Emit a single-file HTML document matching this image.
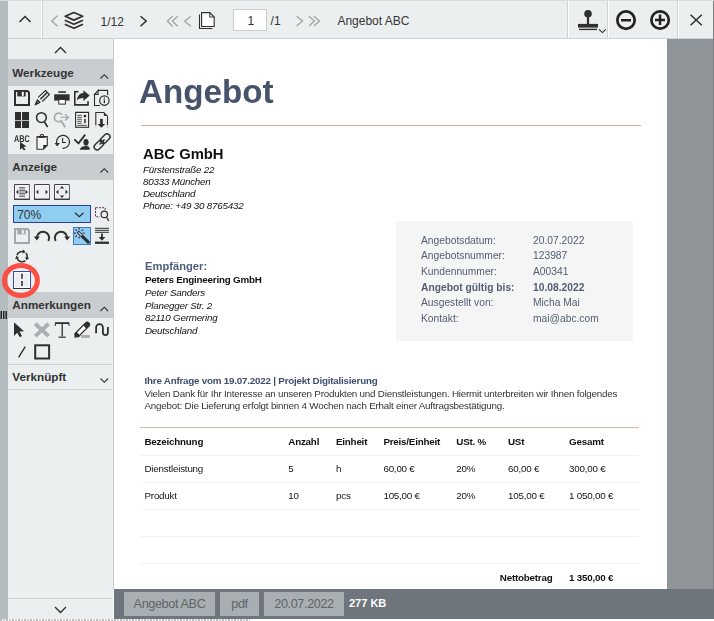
<!DOCTYPE html>
<html><head><meta charset="utf-8">
<style>
*{margin:0;padding:0;box-sizing:border-box}
html,body{width:714px;height:621px;overflow:hidden;background:#fff;font-family:"Liberation Sans",sans-serif}
.a{position:absolute;display:block}
.t{position:absolute;white-space:nowrap}
svg.ov{position:absolute;left:0;top:0}
</style></head><body>

<div class="a" style="left:0px;top:0px;width:714px;height:621px;background:#ffffff;"></div>
<div class="a" style="left:8px;top:39px;width:105px;height:580px;background:#eceff0;"></div>
<div class="a" style="left:113px;top:39px;width:1px;height:550px;background:#c6cacd;"></div>
<div class="a" style="left:114px;top:39px;width:553px;height:550px;background:#ffffff;"></div>
<div class="a" style="left:667px;top:39px;width:47px;height:550px;background:#8f9499;"></div>
<div class="a" style="left:713px;top:0px;width:1px;height:619px;background:#787d82;"></div>
<div class="a" style="left:0px;top:1px;width:8px;height:618px;background:#b4bcbf;"></div>
<div class="a" style="left:0px;top:0px;width:714px;height:1px;background:#d9dcde;"></div>
<div class="a" style="left:114px;top:589px;width:600px;height:30px;background:#6e757d;"></div>
<div class="a" style="left:8px;top:0px;width:705px;height:39px;background:#eceff0;"></div>
<div class="a" style="left:8px;top:0px;width:705px;height:1px;background:#d9dcde;"></div>
<div class="a" style="left:8px;top:38px;width:705px;height:1px;background:#cfd3d5;"></div>
<div class="a" style="left:41px;top:1px;width:1px;height:37px;background:#ffffff;"></div>
<div class="a" style="left:42px;top:1px;width:1px;height:37px;background:#d0d4d6;"></div>
<div class="a" style="left:567px;top:1px;width:1px;height:37px;background:#d0d4d6;"></div>
<div class="a" style="left:568px;top:1px;width:1px;height:37px;background:#ffffff;"></div>
<div class="a" style="left:607px;top:1px;width:1px;height:37px;background:#d0d4d6;"></div>
<div class="a" style="left:608px;top:1px;width:1px;height:37px;background:#ffffff;"></div>
<div class="a" style="left:677px;top:1px;width:1px;height:37px;background:#d0d4d6;"></div>
<div class="a" style="left:678px;top:1px;width:1px;height:37px;background:#ffffff;"></div>
<div class="a" style="left:233px;top:9px;width:34px;height:22px;background:#ffffff;border:1px solid #c9cdd0"></div>
<div class="t" style="left:100.5px;top:15.54px;font-size:12px;line-height:12px;font-weight:normal;font-style:normal;color:#353535;">1/12</div>
<div class="t" style="left:247.4px;top:15.24px;font-size:12px;line-height:12px;font-weight:normal;font-style:normal;color:#353535;">1</div>
<div class="t" style="left:270.6px;top:14.94px;font-size:12px;line-height:12px;font-weight:normal;font-style:normal;color:#353535;">/1</div>
<div class="t" style="left:337.4px;top:14.94px;font-size:12px;line-height:12px;font-weight:normal;font-style:normal;color:#353535;">Angebot ABC</div>
<div class="a" style="left:8px;top:59px;width:105px;height:27px;background:#c9cdd0;"></div>
<div class="a" style="left:8px;top:154px;width:105px;height:26px;background:#c9cdd0;"></div>
<div class="a" style="left:8px;top:292px;width:105px;height:26px;background:#c9cdd0;"></div>
<div class="a" style="left:8px;top:364px;width:104px;height:1px;background:#d0d4d6;"></div>
<div class="a" style="left:8px;top:389px;width:104px;height:1px;background:#d0d4d6;"></div>
<div class="a" style="left:8px;top:598px;width:104px;height:1px;background:#d0d4d6;"></div>
<div class="t" style="left:12.3px;top:67.20px;font-size:11.7px;line-height:11.7px;font-weight:bold;font-style:normal;color:#333;">Werkzeuge</div>
<div class="t" style="left:12.3px;top:161.20px;font-size:11.7px;line-height:11.7px;font-weight:bold;font-style:normal;color:#333;">Anzeige</div>
<div class="t" style="left:12.3px;top:299.40px;font-size:11.7px;line-height:11.7px;font-weight:bold;font-style:normal;color:#333;">Anmerkungen</div>
<div class="t" style="left:12.3px;top:371.20px;font-size:11.7px;line-height:11.7px;font-weight:bold;font-style:normal;color:#333;">Verknüpft</div>
<div class="a" style="left:13px;top:205px;width:78px;height:18px;background:#8fcdf1;border:1px solid #2c3ea0"></div>
<div class="t" style="left:17.2px;top:208.94px;font-size:12px;line-height:12px;font-weight:normal;font-style:normal;color:#333;">70%</div>
<div class="a" style="left:73px;top:227px;width:18px;height:18px;background:#8fcdf1;border:1px solid #3a78c8"></div>
<div class="a" style="left:13px;top:271px;width:18px;height:18px;background:#eceff0;border:1px solid #3a44b0;border-bottom:1.5px solid #333;box-shadow:inset 0 0 0 1px #fafbfb"></div>
<div class="a" style="left:124px;top:592px;width:91px;height:24px;background:#a9aeb2;"></div>
<div class="t" style="left:124px;top:592px;width:91px;height:24px;line-height:25px;text-align:center;font-size:12.6px;letter-spacing:-0.35px;color:#5e646a">Angebot ABC</div>
<div class="a" style="left:220px;top:592px;width:39px;height:24px;background:#a9aeb2;"></div>
<div class="t" style="left:220px;top:592px;width:39px;height:24px;line-height:25px;text-align:center;font-size:12.6px;letter-spacing:-0.35px;color:#5e646a">pdf</div>
<div class="a" style="left:264px;top:592px;width:80px;height:24px;background:#a9aeb2;"></div>
<div class="t" style="left:264px;top:592px;width:80px;height:24px;line-height:25px;text-align:center;font-size:12.6px;letter-spacing:-0.35px;color:#5e646a">20.07.2022</div>
<div class="t" style="left:349px;top:598.19px;font-size:11px;line-height:11px;font-weight:bold;font-style:normal;color:#ffffff;">277 KB</div>
<div style="position:absolute;left:0;top:0;width:714px;height:621px;will-change:transform">
<div class="t" style="left:139px;top:75.40px;font-size:33.2px;line-height:33.2px;font-weight:bold;font-style:normal;color:#46536a;">Angebot</div>
<div class="a" style="left:141px;top:125px;width:500px;height:1px;background:#cfae9c;"></div>
<div class="t" style="left:143px;top:146.97px;font-size:14.8px;line-height:14.8px;font-weight:bold;font-style:normal;color:#111;">ABC GmbH</div>
<div class="t" style="left:143px;top:165.00px;font-size:9.8px;line-height:9.8px;font-weight:normal;font-style:italic;color:#111;letter-spacing:-0.21px">Fürstenstraße 22</div>
<div class="t" style="left:143px;top:176.95px;font-size:9.8px;line-height:9.8px;font-weight:normal;font-style:italic;color:#111;letter-spacing:-0.21px">80333 München</div>
<div class="t" style="left:143px;top:188.90px;font-size:9.8px;line-height:9.8px;font-weight:normal;font-style:italic;color:#111;letter-spacing:-0.21px">Deutschland</div>
<div class="t" style="left:143px;top:200.85px;font-size:9.8px;line-height:9.8px;font-weight:normal;font-style:italic;color:#111;letter-spacing:-0.21px">Phone: +49 30 8765432</div>
<div class="a" style="left:396px;top:221px;width:237px;height:120px;background:#f5f5f5;"></div>
<div class="t" style="left:421px;top:235.61px;font-size:10.27px;line-height:10.27px;font-weight:normal;font-style:normal;color:#535e70;">Angebotsdatum:</div>
<div class="t" style="left:533px;top:235.61px;font-size:10.27px;line-height:10.27px;font-weight:normal;font-style:normal;color:#535e70;">20.07.2022</div>
<div class="t" style="left:421px;top:251.26px;font-size:10.27px;line-height:10.27px;font-weight:normal;font-style:normal;color:#535e70;">Angebotsnummer:</div>
<div class="t" style="left:533px;top:251.26px;font-size:10.27px;line-height:10.27px;font-weight:normal;font-style:normal;color:#535e70;">123987</div>
<div class="t" style="left:421px;top:266.91px;font-size:10.27px;line-height:10.27px;font-weight:normal;font-style:normal;color:#535e70;">Kundennummer:</div>
<div class="t" style="left:533px;top:266.91px;font-size:10.27px;line-height:10.27px;font-weight:normal;font-style:normal;color:#535e70;">A00341</div>
<div class="t" style="left:421px;top:282.56px;font-size:10.27px;line-height:10.27px;font-weight:bold;font-style:normal;color:#535e70;">Angebot gültig bis:</div>
<div class="t" style="left:533px;top:282.56px;font-size:10.27px;line-height:10.27px;font-weight:bold;font-style:normal;color:#535e70;">10.08.2022</div>
<div class="t" style="left:421px;top:298.21px;font-size:10.27px;line-height:10.27px;font-weight:normal;font-style:normal;color:#535e70;">Ausgestellt von:</div>
<div class="t" style="left:533px;top:298.21px;font-size:10.27px;line-height:10.27px;font-weight:normal;font-style:normal;color:#535e70;">Micha Mai</div>
<div class="t" style="left:421px;top:313.86px;font-size:10.27px;line-height:10.27px;font-weight:normal;font-style:normal;color:#535e70;">Kontakt:</div>
<div class="t" style="left:533px;top:313.86px;font-size:10.27px;line-height:10.27px;font-weight:normal;font-style:normal;color:#535e70;">mai@abc.com</div>
<div class="t" style="left:145px;top:260.72px;font-size:11.2px;line-height:11.2px;font-weight:bold;font-style:normal;color:#4f5d7a;">Empfänger:</div>
<div class="t" style="left:145px;top:274.60px;font-size:9.8px;line-height:9.8px;font-weight:bold;font-style:normal;color:#111;letter-spacing:-0.21px">Peters Engineering GmbH</div>
<div class="t" style="left:145px;top:287.70px;font-size:9.8px;line-height:9.8px;font-weight:normal;font-style:italic;color:#111;letter-spacing:-0.21px">Peter Sanders</div>
<div class="t" style="left:145px;top:300.50px;font-size:9.8px;line-height:9.8px;font-weight:normal;font-style:italic;color:#111;letter-spacing:-0.21px">Planegger Str. 2</div>
<div class="t" style="left:145px;top:313.30px;font-size:9.8px;line-height:9.8px;font-weight:normal;font-style:italic;color:#111;letter-spacing:-0.21px">82110 Germering</div>
<div class="t" style="left:145px;top:326.10px;font-size:9.8px;line-height:9.8px;font-weight:normal;font-style:italic;color:#111;letter-spacing:-0.21px">Deutschland</div>
<div class="t" style="left:144.5px;top:375.60px;font-size:9.8px;line-height:9.8px;font-weight:bold;font-style:normal;color:#3f4e6e;letter-spacing:-0.21px">Ihre Anfrage vom 19.07.2022 | Projekt Digitalisierung</div>
<div class="t" style="left:144.5px;top:388.70px;font-size:9.8px;line-height:9.8px;font-weight:normal;font-style:normal;color:#333;letter-spacing:-0.21px">Vielen Dank für Ihr Interesse an unseren Produkten und Dienstleistungen. Hiermit unterbreiten wir Ihnen folgendes</div>
<div class="t" style="left:144.5px;top:400.90px;font-size:9.8px;line-height:9.8px;font-weight:normal;font-style:normal;color:#333;letter-spacing:-0.21px">Angebot: Die Lieferung erfolgt binnen 4 Wochen nach Erhalt einer Auftragsbestätigung.</div>
<div class="a" style="left:140px;top:427px;width:499px;height:1px;background:#d4b6a5;"></div>
<div class="a" style="left:140px;top:455px;width:499px;height:1px;background:#eff3f3;"></div>
<div class="a" style="left:140px;top:482px;width:499px;height:1px;background:#eff3f3;"></div>
<div class="a" style="left:140px;top:509px;width:499px;height:1px;background:#eff3f3;"></div>
<div class="a" style="left:140px;top:536px;width:499px;height:1px;background:#eff3f3;"></div>
<div class="a" style="left:140px;top:563px;width:499px;height:1px;background:#eff3f3;"></div>
<div class="t" style="left:144.5px;top:437.30px;font-size:9.8px;line-height:9.8px;font-weight:bold;font-style:normal;color:#111;letter-spacing:-0.21px">Bezeichnung</div>
<div class="t" style="left:288.3px;top:437.30px;font-size:9.8px;line-height:9.8px;font-weight:bold;font-style:normal;color:#111;letter-spacing:-0.21px">Anzahl</div>
<div class="t" style="left:336px;top:437.30px;font-size:9.8px;line-height:9.8px;font-weight:bold;font-style:normal;color:#111;letter-spacing:-0.21px">Einheit</div>
<div class="t" style="left:383.4px;top:437.30px;font-size:9.8px;line-height:9.8px;font-weight:bold;font-style:normal;color:#111;letter-spacing:-0.21px">Preis/Einheit</div>
<div class="t" style="left:456.3px;top:437.30px;font-size:9.8px;line-height:9.8px;font-weight:bold;font-style:normal;color:#111;letter-spacing:-0.21px">USt. %</div>
<div class="t" style="left:508px;top:437.30px;font-size:9.8px;line-height:9.8px;font-weight:bold;font-style:normal;color:#111;letter-spacing:-0.21px">USt</div>
<div class="t" style="left:569px;top:437.30px;font-size:9.8px;line-height:9.8px;font-weight:bold;font-style:normal;color:#111;letter-spacing:-0.21px">Gesamt</div>
<div class="t" style="left:144.5px;top:463.70px;font-size:9.8px;line-height:9.8px;font-weight:normal;font-style:normal;color:#151515;letter-spacing:-0.21px">Dienstleistung</div>
<div class="t" style="left:288.3px;top:463.70px;font-size:9.8px;line-height:9.8px;font-weight:normal;font-style:normal;color:#151515;letter-spacing:-0.21px">5</div>
<div class="t" style="left:336px;top:463.70px;font-size:9.8px;line-height:9.8px;font-weight:normal;font-style:normal;color:#151515;letter-spacing:-0.21px">h</div>
<div class="t" style="left:383.4px;top:463.70px;font-size:9.8px;line-height:9.8px;font-weight:normal;font-style:normal;color:#151515;letter-spacing:-0.21px">60,00 €</div>
<div class="t" style="left:456.3px;top:463.70px;font-size:9.8px;line-height:9.8px;font-weight:normal;font-style:normal;color:#151515;letter-spacing:-0.21px">20%</div>
<div class="t" style="left:508px;top:463.70px;font-size:9.8px;line-height:9.8px;font-weight:normal;font-style:normal;color:#151515;letter-spacing:-0.21px">60,00 €</div>
<div class="t" style="left:569px;top:463.70px;font-size:9.8px;line-height:9.8px;font-weight:normal;font-style:normal;color:#151515;letter-spacing:-0.21px">300,00 €</div>
<div class="t" style="left:144.5px;top:490.70px;font-size:9.8px;line-height:9.8px;font-weight:normal;font-style:normal;color:#151515;letter-spacing:-0.21px">Produkt</div>
<div class="t" style="left:288.3px;top:490.70px;font-size:9.8px;line-height:9.8px;font-weight:normal;font-style:normal;color:#151515;letter-spacing:-0.21px">10</div>
<div class="t" style="left:336px;top:490.70px;font-size:9.8px;line-height:9.8px;font-weight:normal;font-style:normal;color:#151515;letter-spacing:-0.21px">pcs</div>
<div class="t" style="left:383.4px;top:490.70px;font-size:9.8px;line-height:9.8px;font-weight:normal;font-style:normal;color:#151515;letter-spacing:-0.21px">105,00 €</div>
<div class="t" style="left:456.3px;top:490.70px;font-size:9.8px;line-height:9.8px;font-weight:normal;font-style:normal;color:#151515;letter-spacing:-0.21px">20%</div>
<div class="t" style="left:508px;top:490.70px;font-size:9.8px;line-height:9.8px;font-weight:normal;font-style:normal;color:#151515;letter-spacing:-0.21px">105,00 €</div>
<div class="t" style="left:569px;top:490.70px;font-size:9.8px;line-height:9.8px;font-weight:normal;font-style:normal;color:#151515;letter-spacing:-0.21px">1 050,00 €</div>
<div class="t" style="left:499.8px;top:573.30px;font-size:9.8px;line-height:9.8px;font-weight:bold;font-style:normal;color:#111;letter-spacing:-0.21px">Nettobetrag</div>
<div class="t" style="left:569px;top:573.30px;font-size:9.8px;line-height:9.8px;font-weight:bold;font-style:normal;color:#111;letter-spacing:-0.21px">1 350,00 €</div>
</div>
<div class="a" style="left:0px;top:619px;width:714px;height:2px;background:#ffffff;"></div>
<div class="a" style="left:0px;top:619px;width:250px;height:2px;background:repeating-linear-gradient(90deg,#666 0 2px,#fff 2px 3px,#999 3px 5px,#fff 5px 6px);opacity:.45"></div>
<svg class="ov" width="714" height="621" viewBox="0 0 714 621">
<polyline points="19.5,22 25,16.5 30.5,22" fill="none" stroke="#2f2f2f" stroke-width="1.5"/>
<polyline points="57.5,15.8 51.8,21 57.5,26.2" fill="none" stroke="#9ca2a7" stroke-width="1.4"/>
<polygon points="65.2,16.3 73.9,12.5 82.7,16.3 73.9,20.1" fill="none" stroke="#2f2f2f" stroke-width="1.7" stroke-linejoin="round"/>
<polyline points="64.8,20.3 73.9,24.3 83,20.3" fill="none" stroke="#2f2f2f" stroke-width="1.7" stroke-linejoin="round"/>
<polyline points="64.8,24.2 73.9,28.2 83,24.2" fill="none" stroke="#2f2f2f" stroke-width="1.7" stroke-linejoin="round"/>
<polyline points="140.5,16.2 146.2,21 140.5,26.2" fill="none" stroke="#2f2f2f" stroke-width="1.5"/>
<polyline points="172.6,16.3 167.4,21.3 172.6,26.3" fill="none" stroke="#9ca2a7" stroke-width="1.25"/>
<polyline points="177.6,16.3 172.4,21.3 177.6,26.3" fill="none" stroke="#9ca2a7" stroke-width="1.25"/>
<polyline points="190.8,16.3 184.6,21.3 190.8,26.3" fill="none" stroke="#9ca2a7" stroke-width="1.25"/>
<path d="M199.5,14.5 V28.5 H212.5" fill="none" stroke="#2f2f2f" stroke-width="1.1"/>
<path d="M201.6,12.6 H209.8 L214.2,17 V26.5 H201.6 Z" fill="#fff" stroke="#2f2f2f" stroke-width="1.1"/>
<path d="M209.8,12.6 V17 H214.2" fill="none" stroke="#2f2f2f" stroke-width="1"/>
<polyline points="296.6,16.2 302.6,21 296.6,26" fill="none" stroke="#9ca2a7" stroke-width="1.25"/>
<polyline points="309,16.2 314.5,21 309,26" fill="none" stroke="#9ca2a7" stroke-width="1.25"/>
<polyline points="314,16.2 319.5,21 314,26" fill="none" stroke="#9ca2a7" stroke-width="1.25"/>
<circle cx="588" cy="13.8" r="3.8" fill="#2f2f2f"/>
<rect x="586.9" y="16" width="2.2" height="8.5" fill="#2f2f2f"/>
<rect x="578" y="23.9" width="20" height="3.7" fill="#2f2f2f"/>
<rect x="579" y="28.7" width="18" height="1.4" fill="#2f2f2f"/>
<polyline points="599,29.3 602.4,32.6 605.8,29.3" fill="none" stroke="#2f2f2f" stroke-width="1.1"/>
<circle cx="626" cy="20.1" r="8.7" fill="none" stroke="#222" stroke-width="2.7"/>
<rect x="621" y="19" width="10" height="2.5" fill="#222"/>
<circle cx="660.1" cy="20" r="8.7" fill="none" stroke="#222" stroke-width="2.7"/>
<rect x="655" y="18.7" width="10" height="2.5" fill="#222"/>
<rect x="658.8" y="14.5" width="2.5" height="10.5" fill="#222"/>
<path d="M690.5,14.7 L701.8,25.3 M701.8,14.7 L690.5,25.3" stroke="#2f2f2f" stroke-width="1.5"/>


<polyline points="55,53 60.5,47.5 66,53" fill="none" stroke="#2f2f2f" stroke-width="1.4"/>
<polyline points="100.5,78.5 104.3,74.7 108.1,78.5" fill="none" stroke="#2f2f2f" stroke-width="1.1"/>
<polyline points="100.5,172.5 104.3,168.7 108.1,172.5" fill="none" stroke="#2f2f2f" stroke-width="1.1"/>
<polyline points="100.5,311 104.3,307.2 108.1,311" fill="none" stroke="#2f2f2f" stroke-width="1.1"/>
<polyline points="100.5,378.5 104.3,382.3 108.1,378.5" fill="none" stroke="#2f2f2f" stroke-width="1.1"/>
<polyline points="55,607 60.5,612.5 66,607" fill="none" stroke="#2f2f2f" stroke-width="1.4"/>


<path d="M15,91 H27.5 L29,92.5 V105 H15 Z" fill="none" stroke="#2f2f2f" stroke-width="2"/>
<rect x="17.3" y="90" width="8.4" height="6.4" fill="#2f2f2f"/>
<rect x="21.8" y="91.8" width="2" height="4" fill="#fff"/>
<path d="M38.1,97.4 L45.5,90.6 L49.4,94.5 L42.3,101.5" fill="none" stroke="#2f2f2f" stroke-width="1.1"/>
<line x1="40.4" y1="99.3" x2="47.2" y2="92.5" stroke="#2f2f2f" stroke-width="1.6"/>
<line x1="36.8" y1="99.6" x2="40.2" y2="102.6" stroke="#2f2f2f" stroke-width="1.6"/>
<path d="M34.3,105.7 L36.4,100.6 L39.5,103.6 Z" fill="#2f2f2f"/>
<rect x="58.3" y="91.2" width="7.6" height="1.6" fill="#2f2f2f"/>
<rect x="54.2" y="94.3" width="15.4" height="6.3" fill="#2f2f2f"/>
<rect x="58.8" y="99.5" width="6.6" height="4.6" fill="#fff" stroke="#2f2f2f" stroke-width="1"/>
<path d="M74.8,91 V104.9 H88 V101.2" fill="none" stroke="#2f2f2f" stroke-width="1.6"/>
<line x1="74" y1="91.7" x2="78.5" y2="91.7" stroke="#2f2f2f" stroke-width="1.6"/>
<path d="M77,100.2 C77.3,96 79.8,93.2 83.4,93 V90.3 L89.7,95.6 L83.4,100.9 V97.9 C80.8,97.9 78.6,98.6 77,100.2 Z" fill="#2f2f2f"/>
<path d="M98.1,90.4 H107.6 V95 M94.5,94.4 V105.5 H100 M94.5,94.4 L98.1,90.4 V94.4 Z" fill="none" stroke="#2f2f2f" stroke-width="1.1"/>
<circle cx="104.4" cy="100.6" r="4.7" fill="#eceff0" stroke="#2f2f2f" stroke-width="1.2"/>
<rect x="103.7" y="99.6" width="1.3" height="3.6" fill="#2f2f2f"/>
<rect x="103.7" y="97.6" width="1.3" height="1.2" fill="#2f2f2f"/>


<rect x="15" y="112" width="6" height="8" fill="#2f2f2f"/>
<rect x="22" y="112" width="7" height="8" fill="#2f2f2f"/>
<rect x="15" y="121" width="6" height="7" fill="#2f2f2f"/>
<rect x="22" y="121" width="7" height="7" fill="#2f2f2f"/>
<rect x="15" y="120" width="14" height="1" fill="#b8bcbf"/>
<circle cx="41.4" cy="117.6" r="4.9" fill="none" stroke="#2f2f2f" stroke-width="1.5"/>
<line x1="44.3" y1="121.6" x2="47.6" y2="127" stroke="#2f2f2f" stroke-width="1.7"/>
<path d="M61.99,114.64 A4.3,4.3 0 1 0 61.99,120.16" fill="none" stroke="#a7adb2" stroke-width="1.7"/>
<line x1="61.6" y1="121.6" x2="65.3" y2="127.3" stroke="#a7adb2" stroke-width="2"/>
<path d="M60.5,117.4 H68.5 M65.1,114.4 L68.6,117.4 L65.1,120.4" fill="none" stroke="#a7adb2" stroke-width="1.4"/>
<rect x="75.7" y="112.4" width="12.8" height="14.8" fill="#eceff0" stroke="#2f2f2f" stroke-width="1.3"/>
<rect x="76.9" y="113.6" width="10.4" height="12.4" fill="none" stroke="#fbfcfc" stroke-width="0.8"/>
<path d="M77.3,115.3 H81.8 M77.3,117.3 H81.8 M77.3,119.3 H81.8 M77.3,121.3 H81.8 M77.3,123.3 H81.8 M77.3,125.4 H86.8" stroke="#444" stroke-width="0.9"/>
<circle cx="84.9" cy="116.1" r="1.4" fill="#2f2f2f"/>
<rect x="84.2" y="119" width="1.5" height="4.2" fill="#2f2f2f"/>
<path d="M95.8,125 V112.5 H104.3 M107.5,116 V125" fill="none" stroke="#2f2f2f" stroke-width="1.1"/>
<path d="M95.8,125 V128" stroke="#c4c8cb" stroke-width="1.1"/><path d="M107.5,125 V128" stroke="#c4c8cb" stroke-width="1.1"/>
<path d="M103.9,112 L108,116.1 H103.9 Z" fill="#2f2f2f"/>
<rect x="100.1" y="118.9" width="2.7" height="5.3" fill="#2f2f2f"/>
<path d="M97.5,124 H105.3 L101.4,127.8 Z" fill="#2f2f2f"/>


<text x="14" y="141.8" font-family="Liberation Sans" font-size="9.8" font-weight="bold" fill="#2f2f2f" textLength="15.8" lengthAdjust="spacingAndGlyphs" style="text-rendering:geometricPrecision">ABC</text>
<path d="M20,141.8 L20,150 L22,148 L24,150.5 L25.5,149.5 L23.5,147 L26.5,146.5 Z" fill="#2f2f2f"/>
<path d="M37,136.6 H47.3 V145.2 L43.3,149.2 H37 Z" fill="#f3f5f6" stroke="#2f2f2f" stroke-width="1.1"/>
<path d="M47.6,145 L43.2,149.5 V145 Z" fill="#2f2f2f"/>
<rect x="38.3" y="136.3" width="7.2" height="1.6" fill="#2f2f2f"/>
<path d="M40.4,136.5 V134.6 H43.4 V136.5" fill="none" stroke="#2f2f2f" stroke-width="1"/>
<path d="M57.2,144.7 A6.5,6.5 0 1 1 62.5,148.3" fill="none" stroke="#2f2f2f" stroke-width="1.2"/>
<path d="M54.5,143 L59.8,143 L57.2,146.5 Z" fill="#2f2f2f"/>
<path d="M62.6,138 V142.5 H66" fill="none" stroke="#2f2f2f" stroke-width="1.1"/>
<polyline points="74.3,139.3 78.5,143.4 85.2,134.6" fill="none" stroke="#2f2f2f" stroke-width="1.8"/>
<ellipse cx="86" cy="142.3" rx="2.6" ry="3.4" fill="#2f2f2f"/>
<path d="M79.7,149.8 C80.5,147 83,146 86,146 C89,146 89.8,147.5 89.8,149.8 Z" fill="#2f2f2f"/>
<rect x="99.7" y="135.6" width="11" height="6" rx="3" transform="rotate(-45 105.2 138.6)" fill="none" stroke="#2f2f2f" stroke-width="1.4"/>
<rect x="93.4" y="142.1" width="11" height="6" rx="3" transform="rotate(-45 98.9 145.1)" fill="none" stroke="#2f2f2f" stroke-width="1.4"/>
<line x1="99.5" y1="144.5" x2="104.6" y2="139.4" stroke="#2f2f2f" stroke-width="1.4"/>

<path d="M14.5,184.5 H29.3 V199.3 H14.5 Z" fill="none" stroke="#4a3a55" stroke-width="1"/><rect x="15.5" y="185.5" width="12.8" height="12.8" fill="none" stroke="#fafbfb" stroke-width="0.8"/><rect x="14" y="198.6" width="15.8" height="1.4" fill="#3a3a3a"/><path d="M34.5,184.5 H49.3 V199.3 H34.5 Z" fill="none" stroke="#4a3a55" stroke-width="1"/><rect x="35.5" y="185.5" width="12.8" height="12.8" fill="none" stroke="#fafbfb" stroke-width="0.8"/><rect x="34" y="198.6" width="15.8" height="1.4" fill="#3a3a3a"/><path d="M54.5,184.5 H69.3 V199.3 H54.5 Z" fill="none" stroke="#4a3a55" stroke-width="1"/><rect x="55.5" y="185.5" width="12.8" height="12.8" fill="none" stroke="#fafbfb" stroke-width="0.8"/><rect x="54" y="198.6" width="15.8" height="1.4" fill="#3a3a3a"/>

<path d="M19.2,187.5 H25 M19.2,189 H25 M19.2,190.5 H25 M19.2,192 H25 M19.2,193.5 H25 M19.2,195 H25 M19.2,196.5 H25" stroke="#5a5a5a" stroke-width="0.8"/>
<path d="M15.9,192 L18.4,189.8 V194.2 Z M28,192 L25.5,189.8 V194.2 Z" fill="#2f2f2f"/>
<path d="M35.9,192 L38.4,189.8 V194.2 Z M48,192 L45.5,189.8 V194.2 Z" fill="#2f2f2f"/>
<path d="M55.9,192 L58.4,189.8 V194.2 Z M68,192 L65.5,189.8 V194.2 Z M62,186 L59.8,188.4 H64.2 Z M62,198 L59.8,195.6 H64.2 Z" fill="#2f2f2f"/>


<polyline points="75,212.8 79.3,216.6 83.6,212.8" fill="none" stroke="#2f2f2f" stroke-width="1.2"/>
<path d="M95.5,207.7 H105.2 V210 M95.5,207.7 V216.8 H100" fill="none" stroke="#5a2a5a" stroke-width="1" stroke-dasharray="2,1.3"/>
<circle cx="104.3" cy="214.4" r="3.2" fill="#eceff0" stroke="#2f2f2f" stroke-width="1.2"/>
<line x1="106.4" y1="217" x2="108.9" y2="221" stroke="#2f2f2f" stroke-width="1.3"/>


<path d="M15,229 H27.5 L29,230.5 V243 H15 Z" fill="none" stroke="#a2a7ab" stroke-width="2"/>
<rect x="17.3" y="228" width="8.4" height="6.4" fill="#a2a7ab"/>
<rect x="21.8" y="229.8" width="2" height="4" fill="#eceff0"/>
<path d="M36.8,237.6 A6.2,6.2 0 1 1 48.4,241" fill="none" stroke="#2f2f2f" stroke-width="2"/>
<path d="M33.8,236.6 H39.8 L36.8,240.6 Z" fill="#2f2f2f"/>
<path d="M67.2,237.6 A6.2,6.2 0 1 0 55.6,241" fill="none" stroke="#2f2f2f" stroke-width="2"/>
<path d="M64.2,236.6 H70.2 L67.2,240.6 Z" fill="#2f2f2f"/>
<line x1="77.6" y1="231.6" x2="89.2" y2="243.1" stroke="#2f2f2f" stroke-width="3"/>
<line x1="78.4" y1="232.4" x2="81.6" y2="235.6" stroke="#cfe9f7" stroke-width="1.3"/>
<path d="M82.60,233.20 L84.60,233.20 M79.20,236.60 L79.20,238.60 M76.80,235.60 L75.38,237.02 M75.80,233.20 L73.80,233.20 M76.80,230.80 L75.38,229.38 M79.20,229.80 L79.20,227.80 M81.60,230.80 L83.02,229.38" stroke="#4a2a60" stroke-width="1.2"/>
<path d="M95,228.3 H109 M95,230.3 H109 M95,232.3 H109" stroke="#2f2f2f" stroke-width="1"/>
<rect x="101.1" y="233.5" width="1.8" height="4.5" fill="#2f2f2f"/>
<path d="M98.6,237 H105.4 L102,240.8 Z" fill="#2f2f2f"/>
<rect x="95" y="241.6" width="14" height="2.3" fill="#2f2f2f"/>


<path d="M16.98,255.25 A5.2,5.2 0 0 1 23.35,251.58" fill="none" stroke="#2f2f2f" stroke-width="1.5"/>
<path d="M25.57,252.17 L23.31,249.39 L22.22,253.45 Z" fill="#2f2f2f"/>
<path d="M25.86,253.12 A5.2,5.2 0 0 1 27.02,257.95" fill="none" stroke="#2f2f2f" stroke-width="1.5"/>
<path d="M26.43,260.17 L29.21,257.91 L25.15,256.82 Z" fill="#2f2f2f"/>
<path d="M25.34,260.58 A5.2,5.2 0 0 1 16.98,257.95" fill="none" stroke="#2f2f2f" stroke-width="1.5"/>
<path d="M16.38,255.72 L15.10,259.07 L19.16,257.98 Z" fill="#2f2f2f"/>


<path d="M22,273.8 V278.8 M22,281.1 V286.1" stroke="#3a2030" stroke-width="1.5"/>
<ellipse cx="20.9" cy="280.5" rx="16.5" ry="15.1" fill="none" stroke="#fc4f43" stroke-width="5"/>

<path d="M1.2,311 V319 M3.7,311 V319 M6.2,311 V319" stroke="#222" stroke-width="1.5"/>

<path d="M14,322.3 V336 L17.2,332.8 L19.8,337.3 L22,336 L19.5,331.6 L24,331.3 Z" fill="#2f2f2f"/>
<path d="M35.2,323.7 L48.6,336.1 M48.6,323.7 L35.2,336.1" stroke="#a9afb3" stroke-width="3.9"/>
<path d="M55.3,323.1 H69" stroke="#2f2f2f" stroke-width="1.8"/><path d="M62.2,323.2 V336.6" stroke="#2f2f2f" stroke-width="1.3"/><path d="M58.6,337.2 H65.8" stroke="#2f2f2f" stroke-width="1.2"/>
<path d="M55.3,322.6 V326 M69,322.6 V326" stroke="#2f2f2f" stroke-width="1"/>
<line x1="77.3" y1="334.5" x2="87.2" y2="324.6" stroke="#2f2f2f" stroke-width="5.8" stroke-linecap="round"/>
<line x1="78.2" y1="333.6" x2="84.8" y2="327" stroke="#fff" stroke-width="3.2"/>
<path d="M74.2,337.8 L75.6,332 L80,336.4 Z" fill="#2f2f2f"/>
<rect x="81.2" y="335" width="8.7" height="2.9" fill="#a9afb3"/>
<path d="M96.1,333.2 V327.5 A3.4,3.4 0 0 1 102.9,327.5 V332.6 A2.5,2.5 0 0 0 107.9,332.6 V327" fill="none" stroke="#2f2f2f" stroke-width="1.8"/>
<line x1="18.6" y1="357.3" x2="25.3" y2="346.6" stroke="#2f2f2f" stroke-width="1.4"/>
<rect x="35.2" y="345.3" width="13.9" height="13.2" fill="none" stroke="#2f2f2f" stroke-width="2"/>
</svg>
</body></html>
